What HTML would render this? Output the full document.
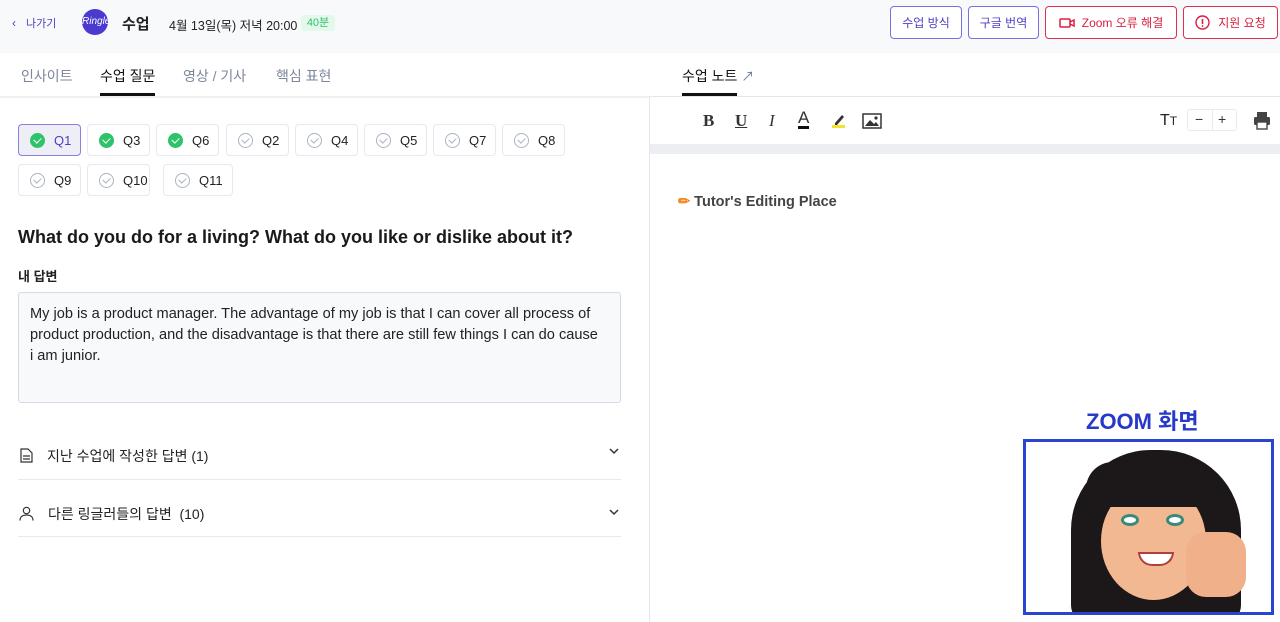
<!DOCTYPE html>
<html><head><meta charset="utf-8"><style>
*{box-sizing:border-box;margin:0;padding:0}
body{width:1280px;height:622px;overflow:hidden;background:#fff;font-family:"Liberation Sans","Noto Sans CJK KR",sans-serif;color:#222;position:relative}
.abs{position:absolute}
.hdr{left:0;top:0;width:1280px;height:53px;background:#f8f9fb}
.btn{position:absolute;top:6px;height:33px;border:1px solid #7b6fe0;border-radius:4px;font-size:12px;color:#4b3fc4;display:flex;align-items:center;justify-content:center;background:#fff}
.btn.r{border-color:#e0304f;color:#d81f40}
.tab{position:absolute;top:66px;font-size:14px;color:#7d869a}
.q{position:absolute;height:32px;border:1px solid #e6e9ef;border-radius:4px;font-size:13px;display:flex;align-items:center;padding-left:11px;gap:9px;color:#222}
.c{width:15px;height:15px;border-radius:50%;display:inline-block;position:relative}
.c.g{background:#2ec26a}
.c.e{border:1px solid #aab3c4}
.c::after{content:"";position:absolute;left:4.5px;top:3px;width:4px;height:6px;border:solid #fff;border-width:0 1.6px 1.6px 0;transform:rotate(45deg)}
.c.e::after{border-color:#aab3c4;left:4px;top:2px}
.tb{position:absolute;top:111px;font-size:17px;color:#333;font-family:"Liberation Serif",serif;font-weight:bold}
</style></head><body>
<div class="abs hdr"></div>
<div class="abs" style="left:12px;top:15px;font-size:12px;color:#4b3fc4">‹&nbsp;&nbsp;&nbsp;<span style="font-size:11px">나가기</span></div>
<div class="abs" style="left:82px;top:9px;width:26px;height:26px;border-radius:50%;background:#4b3ad0;color:#fff;font-size:10px;font-style:italic;text-align:center;line-height:26px">Ringle</div>
<div class="abs" style="left:122px;top:13px;font-size:15px;font-weight:bold">수업</div>
<div class="abs" style="left:169px;top:15px;font-size:12.5px">4월 13일(목) 저녁 20:00</div>
<div class="abs" style="left:301px;top:15px;width:34px;height:16px;background:#e5f8ec;color:#2ec26a;font-size:11px;text-align:center;line-height:16px;border-radius:3px">40분</div>
<div class="btn" style="left:890px;width:72px">수업 방식</div>
<div class="btn" style="left:968px;width:71px">구글 번역</div>
<div class="btn r" style="left:1045px;width:132px"><svg width="16" height="12" viewBox="0 0 16 12" style="margin-right:7px"><rect x="1" y="2" width="10" height="8" rx="1" fill="none" stroke="#d81f40" stroke-width="1.5"/><path d="M11 5l4-2v6l-4-2" fill="none" stroke="#d81f40" stroke-width="1.5"/></svg>Zoom 오류 해결</div>
<div class="btn r" style="left:1183px;width:95px"><svg width="15" height="15" viewBox="0 0 15 15" style="margin-right:8px"><circle cx="7.5" cy="7.5" r="6.5" fill="none" stroke="#d81f40" stroke-width="1.4"/><path d="M7.5 4v5" stroke="#d81f40" stroke-width="1.6"/><circle cx="7.5" cy="11" r=".9" fill="#d81f40"/></svg>지원 요청</div>

<div class="tab" style="left:21px">인사이트</div>
<div class="tab" style="left:100px;color:#111">수업 질문</div>
<div class="abs" style="left:100px;top:93px;width:55px;height:3px;background:#111"></div>
<div class="tab" style="left:183px">영상 / 기사</div>
<div class="tab" style="left:276px">핵심 표현</div>
<div class="abs" style="left:0;top:96px;width:649px;height:2px;background:#eef0f4"></div>
<div class="abs" style="left:649px;top:96px;width:1px;height:526px;background:#e3e6ec"></div>
<div class="tab" style="left:682px;color:#111">수업 노트 <span style="color:#6a7a9a;font-size:13px">↗</span></div>
<div class="abs" style="left:682px;top:93px;width:55px;height:3px;background:#111"></div>
<div class="abs" style="left:650px;top:96px;width:630px;height:1px;background:#e3e6ec"></div>

<div class="q" style="left:18px;top:124px;width:63px;background:#eeeff6;border-color:#8b7fe0;color:#4b3fc4"><span class="c g"></span>Q1</div>
<div class="q" style="left:87px;top:124px;width:63px"><span class="c g"></span>Q3</div>
<div class="q" style="left:156px;top:124px;width:63px"><span class="c g"></span>Q6</div>
<div class="q" style="left:226px;top:124px;width:63px"><span class="c e"></span>Q2</div>
<div class="q" style="left:295px;top:124px;width:63px"><span class="c e"></span>Q4</div>
<div class="q" style="left:364px;top:124px;width:63px"><span class="c e"></span>Q5</div>
<div class="q" style="left:433px;top:124px;width:63px"><span class="c e"></span>Q7</div>
<div class="q" style="left:502px;top:124px;width:63px"><span class="c e"></span>Q8</div>
<div class="q" style="left:18px;top:164px;width:63px"><span class="c e"></span>Q9</div>
<div class="q" style="left:87px;top:164px;width:63px"><span class="c e"></span>Q10</div>
<div class="q" style="left:163px;top:164px;width:70px"><span class="c e"></span>Q11</div>

<div class="abs" style="left:18px;top:227px;font-size:18px;font-weight:bold;color:#1a1a1a">What do you do for a living? What do you like or dislike about it?</div>
<div class="abs" style="left:18px;top:266px;font-size:13px;font-weight:bold">내 답변</div>
<div class="abs" style="left:18px;top:292px;width:603px;height:111px;border:1px solid #d5dbe6;border-radius:3px;background:#f8f9fb;padding:11px 11px;font-size:14.6px;line-height:21px;color:#222;white-space:nowrap;overflow:hidden">My job is a product manager. The advantage of my job is that I can cover all process of<br>product production, and the disadvantage is that there are still few things I can do cause<br>i am junior.</div>

<div class="abs" style="left:20px;top:446px;font-size:14px;color:#222"><svg width="13" height="15" viewBox="0 0 13 15" style="vertical-align:-2px;margin-right:14px"><path d="M1 1h7l4 4v9H1z M3 8h7 M3 11h7" fill="none" stroke="#333" stroke-width="1.2"/></svg>지난 수업에 작성한 답변 (1)</div>
<svg class="abs" style="left:609px;top:447px" width="10" height="8" viewBox="0 0 10 8"><path d="M1 2l4 4 4-4" fill="none" stroke="#333" stroke-width="1.5"/></svg>
<div class="abs" style="left:18px;top:479px;width:603px;height:1px;background:#e6e9ef"></div>
<div class="abs" style="left:19px;top:504px;font-size:14px;color:#222"><svg width="15" height="15" viewBox="0 0 15 15" style="vertical-align:-2px;margin-right:14px"><circle cx="7.5" cy="4.5" r="3.2" fill="none" stroke="#333" stroke-width="1.2"/><path d="M1 14.5c0-4 3-5.5 6.5-5.5s6.5 1.5 6.5 5.5" fill="none" stroke="#333" stroke-width="1.2"/></svg>다른 링글러들의 답변&nbsp; (10)</div>
<svg class="abs" style="left:609px;top:508px" width="10" height="8" viewBox="0 0 10 8"><path d="M1 2l4 4 4-4" fill="none" stroke="#333" stroke-width="1.5"/></svg>
<div class="abs" style="left:18px;top:536px;width:603px;height:1px;background:#e6e9ef"></div>

<div class="tb" style="left:703px">B</div>
<div class="tb" style="left:735px;text-decoration:underline">U</div>
<div class="tb" style="left:769px;font-style:italic;font-weight:normal">I</div>
<div class="tb" style="left:798px;font-family:'Liberation Sans';font-weight:normal;top:109px;border-bottom:3px solid #111;line-height:17px">A</div>
<div class="abs" style="left:831px;top:112px;width:15px;height:15px"><svg width="15" height="16" viewBox="0 0 15 16"><path d="M4 11l7-8 2 2-7 8H4z" fill="#333"/><rect x="1" y="13" width="13" height="3" fill="#f5e52a"/></svg></div>
<div class="abs" style="left:862px;top:113px"><svg width="20" height="16" viewBox="0 0 20 16"><rect x="1" y="1" width="18" height="14" fill="none" stroke="#333" stroke-width="1.5"/><path d="M3 13l5-6 4 4 2-2 3 4z" fill="#333"/><circle cx="14" cy="5" r="1.6" fill="#333"/></svg></div>
<div class="abs" style="left:1160px;top:112px;font-size:16px;color:#222">T<span style="font-size:12px">T</span></div>
<div class="abs" style="left:1187px;top:109px;width:50px;height:22px;border:1px solid #e6e9ef;border-radius:3px;font-size:14px;color:#333"><span style="position:absolute;left:7px;top:1px">−</span><span style="position:absolute;left:24px;top:0;width:1px;height:20px;background:#e6e9ef"></span><span style="position:absolute;left:30px;top:1px">+</span></div>
<div class="abs" style="left:1253px;top:111px"><svg width="18" height="19" viewBox="0 0 18 19"><rect x="4" y="1" width="10" height="5" fill="#444"/><rect x="1" y="6" width="16" height="8" rx="1.5" fill="#444"/><rect x="4" y="11" width="10" height="7" fill="#fff" stroke="#444" stroke-width="1.4"/></svg></div>
<div class="abs" style="left:650px;top:144px;width:630px;height:10px;background:#eceef2"></div>
<div class="abs" style="left:678px;top:194px;font-size:14.5px;font-weight:bold;color:#444"><span style="color:#f08a24">✏</span> Tutor's Editing Place</div>

<div class="abs" style="left:1086px;top:404px;font-size:22px;font-weight:bold;color:#2838c8">ZOOM 화면</div>
<div class="abs" style="left:1023px;top:439px;width:251px;height:176px;border:3px solid #2845d1;background:#fff;overflow:hidden">
<div class="abs" style="left:45px;top:8px;width:170px;height:175px;border-radius:80px 80px 20px 20px;background:#1c1718"></div>
<div class="abs" style="left:75px;top:40px;width:105px;height:118px;border-radius:50%;background:#f2b891"></div>
<div class="abs" style="left:60px;top:20px;width:130px;height:45px;border-radius:60px 60px 20px 40px;background:#1c1718"></div>
<div class="abs" style="left:95px;top:72px;width:18px;height:12px;border-radius:50%;background:#fff;border:3px solid #3a8a7a"></div>
<div class="abs" style="left:140px;top:72px;width:18px;height:12px;border-radius:50%;background:#fff;border:3px solid #3a8a7a"></div>
<div class="abs" style="left:112px;top:110px;width:36px;height:14px;border-radius:0 0 20px 20px;background:#fff;border:2px solid #b04040"></div>
<div class="abs" style="left:160px;top:90px;width:60px;height:65px;border-radius:20px;background:#f0b089"></div>
</div>
</body></html>
